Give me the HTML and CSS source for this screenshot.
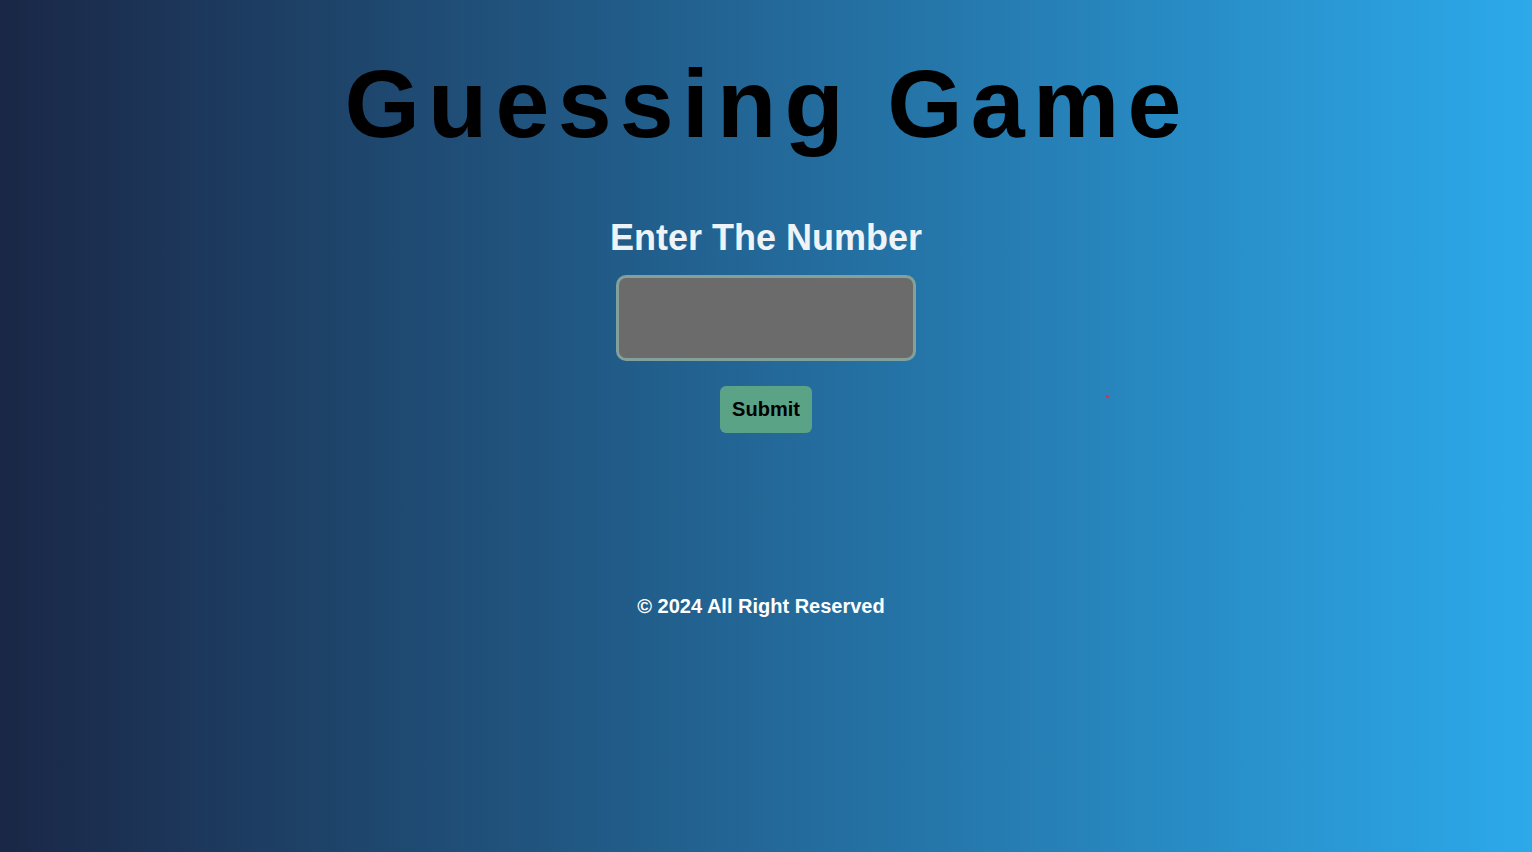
FILE: index.html
```html
<!DOCTYPE html>
<html lang="en">
<head>
<meta charset="utf-8">
<title>Guessing Game</title>
<link rel="stylesheet" href="styles.css">
</head>
<body>
<main class="page">
  <h1 class="title">Guessing Game</h1>
  <h2 class="prompt">Enter The Number</h2>
  <input class="guess" type="text" aria-label="Your guess">
  <button class="submit" type="button">Submit</button>
  <footer class="footer">© 2024 All Right Reserved</footer>
</main>
<span class="dot"></span>
</body>
</html>
```
FILE: styles.css
```css
html, body {
  margin: 0;
  padding: 0;
  height: 100%;
}
body {
  background: linear-gradient(to right, #1a2746 0%, #2ca9ea 100%);
  font-family: "Liberation Sans", Arial, sans-serif;
  overflow: hidden;
  position: relative;
}
.page {
  display: flex;
  flex-direction: column;
  align-items: center;
  padding-top: 55px;
}
.title {
  margin: 0;
  font-size: 97px;
  line-height: 97px;
  font-weight: 700;
  letter-spacing: 8.2px;
  padding-left: 2px;
  color: #000;
}
.prompt {
  margin: 68px 0 0;
  font-size: 36px;
  line-height: 36px;
  font-weight: 700;
  color: #eef3f8;
}
.guess {
  box-sizing: border-box;
  margin-top: 19px;
  width: 300px;
  height: 86px;
  border: 3px solid #84a09a;
  border-radius: 10px;
  background: #6b6b6b;
  color: #fff;
  font-size: 24px;
  outline: none;
}
.submit {
  box-sizing: border-box;
  margin-top: 25px;
  width: 92px;
  height: 47px;
  border: none;
  border-radius: 6px;
  background: #5aa386;
  color: #000;
  font-family: "Liberation Sans", Arial, sans-serif;
  font-size: 20px;
  font-weight: 700;
  padding: 0;
}
.footer {
  margin-top: 163px;
  font-size: 20px;
  line-height: 20px;
  font-weight: 700;
  color: #fff;
  margin-right: 10px;
}
.dot {
  position: absolute;
  left: 1106px;
  top: 395px;
  width: 3px;
  height: 3px;
  background: #d0345a;
}
```
